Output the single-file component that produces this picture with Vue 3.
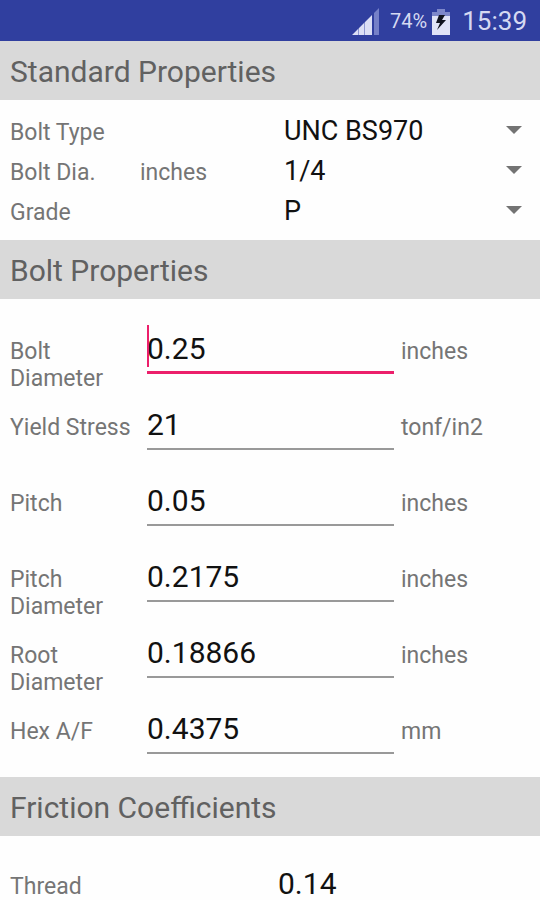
<!--
App.vue - Bolt properties form

Status bar, standard bolt selection, editable bolt properties and friction coefficients.
-->

<template>
  <div class="screen">
    <header class="status-bar">
      <svg class="signal" width="28" height="27" viewBox="0 0 28 27" aria-hidden="true">
        <path d="M0 27 L6 21 V27 Z M7 20 L12 15 V27 H7 Z M13 14 L20 7 V27 H13 Z" fill="#dcdff5" />
        <path d="M6 21 L7 20 V27 H6 Z M12 15 L13 14 V27 H12 Z" fill="#8e97d2" />
        <path d="M22 5 L27 0 V27 H22 Z" fill="#7580c8" />
      </svg>
      <span class="battery-text">74%</span>
      <svg class="battery" width="18" height="26" viewBox="0 0 18 26" aria-hidden="true">
        <path d="M5 0 H13 V3 H18 V8 H0 V3 H5 Z" fill="#7d87ca" />
        <path d="M0 7 H18 V26 H0 Z" fill="#e0e3f7" />
        <path d="M7 6 H13 L10 11 H14 L5 21 L8 14 H4 Z" fill="#10131f" />
      </svg>
      <span class="clock">15:39</span>
    </header>

    <main>
      <h2>Standard Properties</h2>
      <section class="standard">
        <div v-for="item in standard" :key="item.id" class="select-row">
          <label :for="item.id">{{ item.label }}</label>
          <span class="unit">{{ item.unit }}</span>
          <div class="select-box">
            <select :id="item.id" v-model="item.value">
              <option v-for="option in item.options" :key="option">{{ option }}</option>
            </select>
            <svg class="arrow" width="16" height="8" viewBox="0 0 16 8" aria-hidden="true">
              <path d="M0 0 H16 L8 8 Z" fill="#737373" />
            </svg>
          </div>
        </div>
      </section>

      <h2>Bolt Properties</h2>
      <section class="fields">
        <div v-for="field in fields" :key="field.id" class="field-row">
          <label :for="field.id">{{ field.label }}</label>
          <div class="input-box">
            <input
              :id="field.id"
              v-model="field.value"
              type="text"
              inputmode="decimal"
              :class="{ active: active === field.id }"
              @focus="active = field.id"
            >
            <span v-if="active === field.id" class="caret"></span>
          </div>
          <span class="unit">{{ field.unit }}</span>
        </div>
      </section>

      <h2>Friction Coefficients</h2>
      <section class="friction">
        <div class="field-row">
          <label for="thread">Thread</label>
          <div class="input-box">
            <input id="thread" v-model="thread" type="text" inputmode="decimal">
          </div>
        </div>
      </section>
    </main>
  </div>
</template>

<script setup>
import { ref } from 'vue';

const standard = ref([
  { id: 'bolt-type', label: 'Bolt Type', unit: '', value: 'UNC BS970', options: ['UNC BS970'] },
  { id: 'bolt-dia', label: 'Bolt Dia.', unit: 'inches', value: '1/4', options: ['1/4'] },
  { id: 'grade', label: 'Grade', unit: '', value: 'P', options: ['P'] },
]);

const fields = ref([
  { id: 'diameter', label: 'Bolt Diameter', value: '0.25', unit: 'inches' },
  { id: 'yield', label: 'Yield Stress', value: '21', unit: 'tonf/in2' },
  { id: 'pitch', label: 'Pitch', value: '0.05', unit: 'inches' },
  { id: 'pitch-diameter', label: 'Pitch Diameter', value: '0.2175', unit: 'inches' },
  { id: 'root-diameter', label: 'Root Diameter', value: '0.18866', unit: 'inches' },
  { id: 'hex', label: 'Hex A/F', value: '0.4375', unit: 'mm' },
]);

const thread = ref('0.14');
const active = ref('diameter');
</script>

<style>
html {
  scrollbar-width: none;
}
body {
  margin: 0;
  background: #fefefe;
}
</style>

<style scoped>
.screen {
  font-family: Roboto, sans-serif;
  font-size: 23px;
  line-height: 27px;
  color: #757575;
}
.status-bar {
  display: flex;
  align-items: center;
  justify-content: flex-end;
  box-sizing: border-box;
  height: 41px;
  padding: 2px 13px 0 0;
  background: #303f9f;
  color: #d5d9f2;
}
.battery-text {
  margin: 0 5px 0 10px;
  font-size: 20px;
}
.battery {
  margin-right: 12px;
}
.clock {
  font-size: 26px;
}
h2 {
  margin: 0;
  padding: 13px 10px 11px;
  background: #d9d9d9;
  color: #616161;
  font-size: 30px;
  font-weight: 400;
  line-height: 35px;
}
.standard {
  padding: 10px 16px 10px 10px;
}
.select-row {
  display: grid;
  grid-template-columns: 130fr 144fr 240fr;
  align-items: baseline;
  height: 40px;
}
.select-box {
  display: flex;
  align-items: center;
  position: relative;
}
select {
  width: 100%;
  height: 40px;
  padding: 2px 0 0;
  border: 0;
  outline: 0;
  appearance: none;
  background: transparent;
  color: #111;
  font-family: inherit;
  font-size: 27px;
}
.arrow {
  position: absolute;
  right: 2px;
  pointer-events: none;
}
.fields {
  padding: 21px 7px 1px 10px;
}
.friction {
  padding: 19px 7px 0 10px;
}
.field-row {
  display: grid;
  grid-template-columns: 137fr 247fr 139fr;
  align-items: baseline;
  height: 76px;
}
.friction .field-row {
  grid-template-columns: 268fr 255fr;
}
.input-box {
  position: relative;
}
input {
  display: block;
  box-sizing: border-box;
  width: 100%;
  height: 54px;
  padding: 5px 0 0;
  border: 0;
  border-bottom: 2px solid #999;
  border-radius: 0;
  outline: 0;
  background: transparent;
  caret-color: transparent;
  color: #111;
  font-family: inherit;
  font-size: 30px;
}
input.active {
  border-bottom: 3px solid #ec1f6b;
}
.caret {
  position: absolute;
  top: 5px;
  left: 0;
  width: 2px;
  height: 42px;
  background: #ec1f6b;
}
.fields .unit {
  padding-left: 7px;
}
</style>
